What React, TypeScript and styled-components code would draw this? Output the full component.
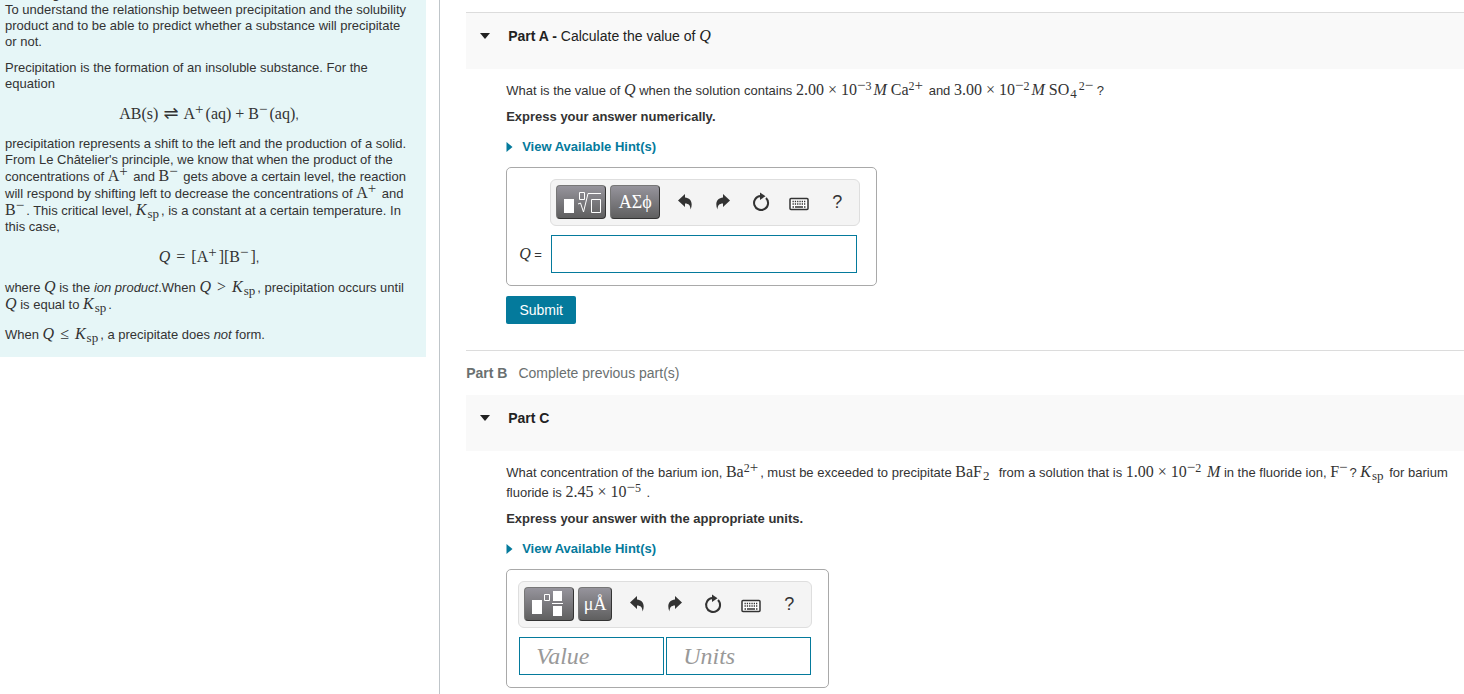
import React from 'react';
import styled, { createGlobalStyle } from 'styled-components';

const Global = createGlobalStyle`
  *, *::before, *::after { box-sizing: border-box; }
  body {
    margin: 0;
    background: #fff;
    color: #333;
    font: 13px/16px "Liberation Sans", Arial, sans-serif;
  }
  p { margin: 0; }
`;

const Page = styled.div`
  display: flex;
  min-height: 100vh;
`;

const Aside = styled.aside`
  flex: 0 0 calc(30% + 1px);
  padding-right: 13px;
  border-right: 1px solid #bfc5c9;
  overflow: hidden;
`;

const Goal = styled.section`
  margin-top: -14px;
  padding: 0 13px 14px 5px;
  background: #e6f6f7;
  p + p { margin-top: 10px; }
  p:last-child { margin-top: 13px; }
`;

const GoalTitle = styled.h2`
  margin: 0;
  font-size: 13px;
  line-height: 16px;
`;

const Equation = styled.div`
  margin: 14px 0 13px;
  text-align: center;
`;

const Main = styled.main`
  flex: 1;
  min-width: 0;
  padding: 12px 0 6px 26px;
`;

const PartHeader = styled.header<{ $ruled?: boolean }>`
  display: flex;
  align-items: flex-start;
  height: ${p => (p.$ruled ? 57 : 56)}px;
  padding: 13px;
  background: #f9f9f9;
  border-top: ${p => (p.$ruled ? '1px solid #dcdcdc' : '0')};
`;

const Toggle = styled.button`
  display: flex;
  align-items: center;
  width: 29px;
  height: 20px;
  padding: 0;
  border: 0;
  background: none;
  color: #222;
`;

const PartTitle = styled.h3`
  margin: 0;
  color: #222;
  font-size: 14px;
  line-height: 20px;
  font-weight: 400;
`;

const Body = styled.div`
  padding: 12px 0 0 40px;
`;

const Question = styled.p`
  line-height: 20px;
`;

const Instruction = styled.p`
  && { margin-top: 6px; }
  line-height: 20px;
  font-weight: 700;
`;

const Hint = styled.button`
  display: flex;
  align-items: center;
  gap: 9px;
  margin-top: 10px;
  padding: 0;
  border: 0;
  background: none;
  color: #047a9c;
  font: 700 13px/20px "Liberation Sans", Arial, sans-serif;
`;

const AnswerBox = styled.div`
  display: flex;
  flex-direction: column;
  gap: 9px;
  width: fit-content;
  margin-top: 10px;
  padding: 11px 11px 12px;
  border: 1px solid #a9a9a9;
  border-radius: 5px;
`;

const Toolbar = styled.div<{ $inset?: boolean }>`
  display: flex;
  align-items: flex-start;
  height: 47px;
  margin-left: ${p => (p.$inset ? 32 : 0)}px;
  margin-right: 5px;
  padding: 5px 3px 5px 5px;
  border: 1px solid #dedede;
  border-radius: 6px;
  background: #f4f4f4;
`;

const Palettes = styled.div`
  display: flex;
  gap: 4px;
  margin-right: 6px;
`;

const PaletteButton = styled.button<{ $narrow?: boolean }>`
  display: flex;
  align-items: center;
  justify-content: center;
  width: ${p => (p.$narrow ? 34 : 50)}px;
  height: 34px;
  padding: 0;
  border: 1px solid #333;
  border-top-color: #777;
  border-left-color: #777;
  border-radius: 4px;
  background: linear-gradient(#96949c, #5f5f5f);
  color: #fff;
  font: 18px/20px "Liberation Serif", serif;
`;

const ToolButton = styled.button`
  display: flex;
  align-items: center;
  justify-content: center;
  width: 38px;
  height: 34px;
  padding: 0;
  border: 0;
  background: none;
  color: #333;
  font: 18px/20px "Liberation Sans", Arial, sans-serif;
`;

const FieldRow = styled.div`
  display: flex;
  align-items: center;
  gap: 2px;
  padding: 0 6px 0 1px;
`;

const FieldLabel = styled.label`
  width: 30px;
`;

const Field = styled.input<{ $wide?: boolean }>`
  width: ${p => (p.$wide ? 306 : 145)}px;
  height: 38px;
  padding: 0 16px;
  border: 1px solid #047a9c;
  background: #fff;
  font: 24px/30px "Liberation Serif", serif;
  &::placeholder { color: #999; font-style: italic; opacity: 1; }
`;

const Submit = styled.button`
  width: 70px;
  height: 28px;
  margin-top: 10px;
  padding: 0;
  border: 0;
  border-radius: 2px;
  background: #047a9c;
  color: #fff;
  font: 14px/20px "Liberation Sans", Arial, sans-serif;
`;

const LockedPart = styled.div`
  display: flex;
  gap: 11px;
  margin-top: 26px;
  padding: 12px 0;
  border-top: 1px solid #dcdcdc;
  color: #6a7070;
  font-size: 14px;
  line-height: 20px;
`;

const Math = styled.span`
  font: 16px/16px "Liberation Serif", serif;
  white-space: nowrap;
`;
const Sub = styled.span`
  margin: 0 2px 0 1px;
  font-size: 13px;
  line-height: 0;
  vertical-align: -3px;
`;
const Sup = styled.span`
  margin-right: 2px;
  font-size: 12px;
  line-height: 0;
  vertical-align: 5px;
  ${Sub} + & { margin-right: 0; }
`;
const Sign = styled.span`
  font-size: 15px;
`;
const Rel = styled.span`
  margin: 0 6px;
`;
const Harpoons = styled.span`
  margin: 0 5px;
  font: 18px/10px "DejaVu Sans", sans-serif;
`;

const Q = () => <Math><i>Q</i></Math>;
const Ksp = () => <Math><i>K</i><Sub>sp</Sub></Math>;
const Charge = ({ n, sign }: { n?: string; sign: string }) => (
  <Sup>{n}<Sign>{sign}</Sign></Sup>
);
const APlus = () => <Math>A<Charge sign="+" /></Math>;
const BMinus = () => <Math>B<Charge sign="−" /></Math>;
const Sci = ({ value, exp }: { value: string; exp: string }) => (
  <Math>{value} × 10<Sup><Sign>−</Sign>{exp}</Sup></Math>
);

const Caret = () => (
  <svg width="12" height="6" viewBox="0 0 12 6" aria-hidden="true"><path d="M1 0h10L6 6z" fill="currentColor" /></svg>
);
const HintCaret = () => (
  <svg width="7" height="10" viewBox="0 0 7 10" aria-hidden="true"><path d="M.5 0l6 5-6 5z" fill="currentColor" /></svg>
);
const ArrowIcon = ({ flip }: { flip?: boolean }) => (
  <svg width="16" height="16" viewBox="0 0 16 16" aria-hidden="true">
    <path transform={flip ? 'matrix(-1 0 0 1 16 0)' : undefined} fill="currentColor" d="M1 6.500L8 0V3.500C13.500 4 16.500 8.500 13.500 15.500C13.500 11.500 11.800 9.500 8 9.500V13z" />
  </svg>
);
const ResetIcon = () => (
  <svg width="18" height="20" viewBox="0 0 18 20" aria-hidden="true">
    <path d="M14 6A7 7 0 1 1 8.500 4" fill="none" stroke="currentColor" strokeWidth="2" />
    <path d="M8 .5l5.500 3.700L8 8z" fill="currentColor" />
  </svg>
);
const KeyboardIcon = () => (
  <svg width="20" height="18" viewBox="0 -4 20 18" aria-hidden="true">
    <rect x="1" y="1.500" width="18" height="11" rx="1" fill="#fff" stroke="currentColor" strokeWidth="1.500" />
    <path d="M3.500 4.500h13M3.500 7h13" stroke="currentColor" strokeWidth="1.500" strokeDasharray="1.300 1" />
    <path d="M3.500 10h1.500M6 10h8M15 10h1.500" stroke="currentColor" strokeWidth="1.500" />
  </svg>
);
const RootIcon = () => (
  <svg width="40" height="24" viewBox="0 0 40 24" aria-hidden="true">
    <rect x="3" y="9" width="10" height="14" fill="#fff" />
    <path d="M18.500 2.500h5v7h-5zM17 14l2.500-1 3 9 4.500-18.500h13M30.500 9.500h9v13h-9z" fill="none" stroke="#fff" />
  </svg>
);
const FractionIcon = () => (
  <svg width="34" height="26" viewBox="0 0 34 26" aria-hidden="true">
    <path d="M0 9h10v14H0zM21 0h9v10h-9zM21 15h9v10h-9zM20 12h11v1H20z" fill="#fff" />
    <path d="M12.500 3.500h5v6h-5z" fill="none" stroke="#fff" />
  </svg>
);

const ToolSet = () => (
  <>
    <ToolButton aria-label="Undo"><ArrowIcon /></ToolButton>
    <ToolButton aria-label="Redo"><ArrowIcon flip /></ToolButton>
    <ToolButton aria-label="Reset"><ResetIcon /></ToolButton>
    <ToolButton aria-label="Keyboard shortcuts"><KeyboardIcon /></ToolButton>
    <ToolButton aria-label="Help">?</ToolButton>
  </>
);

export default function App() {
  return (
    <>
      <Global />
      <Page>
        <Aside>
          <Goal>
            <GoalTitle>Learning Goal:</GoalTitle>
            <p>To understand the relationship between precipitation and the solubility product and to be able to predict whether a substance will precipitate or not.</p>
            <p>Precipitation is the formation of an insoluble substance. For the equation</p>
            <Equation>
              <Math>AB(s)<Harpoons>⇌</Harpoons>A<Charge sign="+" />(aq) + B<Charge sign="−" />(aq)</Math>,
            </Equation>
            <p>
              precipitation represents a shift to the left and the production of a solid. From Le Châtelier's principle, we know that when the product of the concentrations of <APlus /> and <BMinus /> gets above a certain level, the reaction will respond by shifting left to decrease the concentrations of <APlus /> and <BMinus />. This critical level, <Ksp />, is a constant at a certain temperature. In this case,
            </p>
            <Equation>
              <Math><i>Q</i><Rel>=</Rel>[A<Charge sign="+" />][B<Charge sign="−" />]</Math>,
            </Equation>
            <p>
              where <Q /> is the <i>ion product</i>.When <Math><i>Q</i><Rel>&gt;</Rel></Math><Ksp />, precipitation occurs until <Q /> is equal to <Ksp />.
            </p>
            <p>
              When <Math><i>Q</i><Rel>≤</Rel></Math><Ksp />, a precipitate does <i>not</i> form.
            </p>
          </Goal>
        </Aside>
        <Main>
          <PartHeader $ruled>
            <Toggle aria-label="Collapse Part A"><Caret /></Toggle>
            <PartTitle><b>Part A - </b>Calculate the value of <Q /></PartTitle>
          </PartHeader>
          <Body>
            <Question>
              What is the value of <Q /> when the solution contains <Sci value="2.00" exp="3" /><Math><i>M</i> Ca<Charge n="2" sign="+" /></Math> and <Sci value="3.00" exp="2" /><Math><i>M</i> SO<Sub>4</Sub><Charge n="2" sign="−" /></Math> ?
            </Question>
            <Instruction>Express your answer numerically.</Instruction>
            <Hint><HintCaret />View Available Hint(s)</Hint>
            <AnswerBox>
              <Toolbar $inset>
                <Palettes>
                  <PaletteButton aria-label="Templates"><RootIcon /></PaletteButton>
                  <PaletteButton>ΑΣϕ</PaletteButton>
                </Palettes>
                <ToolSet />
              </Toolbar>
              <FieldRow>
                <FieldLabel htmlFor="q"><Q /> =</FieldLabel>
                <Field id="q" $wide />
              </FieldRow>
            </AnswerBox>
            <Submit>Submit</Submit>
          </Body>
          <LockedPart><b>Part B</b><span>Complete previous part(s)</span></LockedPart>
          <PartHeader>
            <Toggle aria-label="Collapse Part C"><Caret /></Toggle>
            <PartTitle><b>Part C</b></PartTitle>
          </PartHeader>
          <Body>
            <Question>
              What concentration of the barium ion, <Math>Ba<Charge n="2" sign="+" /></Math>, must be exceeded to precipitate <Math>BaF<Sub>2</Sub></Math>&nbsp; from a solution that is <Sci value="1.00" exp="2" /> <Math><i>M</i></Math> in the fluoride ion, <Math>F<Charge sign="−" /></Math>? <Ksp /> for barium fluoride is <Sci value="2.45" exp="5" /> .
            </Question>
            <Instruction>Express your answer with the appropriate units.</Instruction>
            <Hint><HintCaret />View Available Hint(s)</Hint>
            <AnswerBox>
              <Toolbar>
                <Palettes>
                  <PaletteButton aria-label="Templates"><FractionIcon /></PaletteButton>
                  <PaletteButton $narrow>μÅ</PaletteButton>
                </Palettes>
                <ToolSet />
              </Toolbar>
              <FieldRow>
                <Field aria-label="Value" placeholder="Value" />
                <Field aria-label="Units" placeholder="Units" />
              </FieldRow>
            </AnswerBox>
          </Body>
        </Main>
      </Page>
    </>
  );
}
